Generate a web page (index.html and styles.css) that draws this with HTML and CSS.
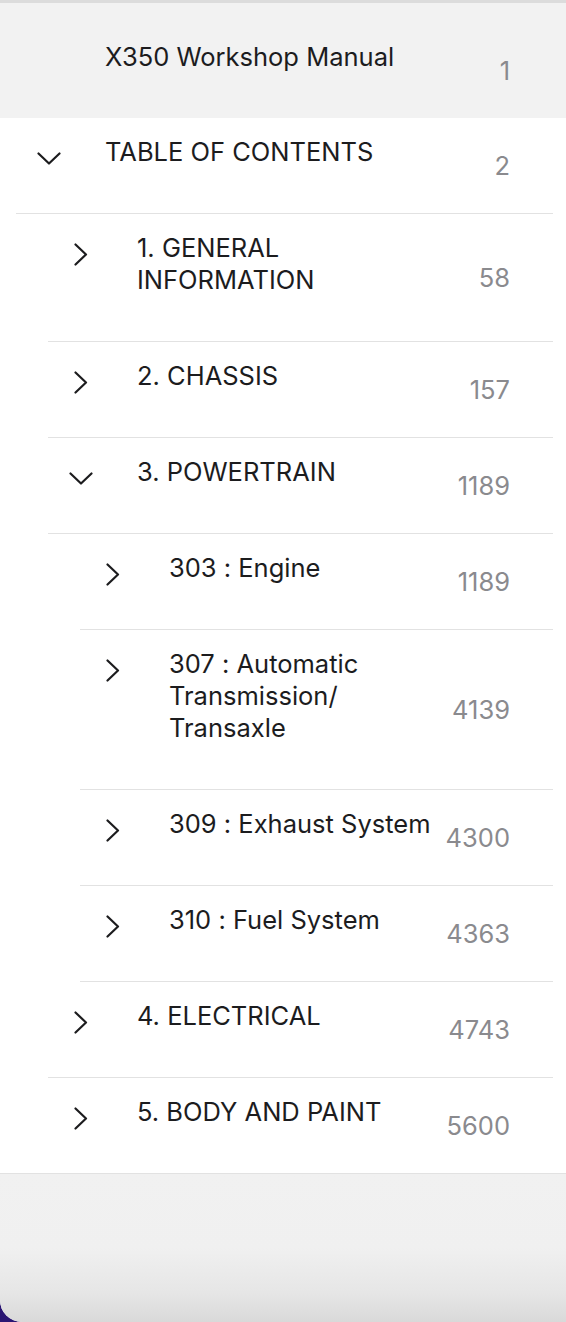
FILE: index.html
```html
<!DOCTYPE html>
<html lang="en">
<head>
    <meta charset="UTF-8">
    <meta name="viewport" content="width=device-width, initial-scale=1.0">
    <title>X350 Workshop Manual</title>
    <link rel="stylesheet" href="styles.css">
</head>
<body>
    <div class="window">
        <div class="manual-header">
            <div class="row">
                <span class="toggle"></span>
                <span class="title">X350 Workshop Manual</span>
                <span class="page">1</span>
            </div>
        </div>

        <div class="toc">
            <div class="row level-0">
                <span class="toggle">
                    <svg class="chev-down" width="24" height="13" viewBox="0 0 24 13"><polyline points="1.5,1.5 12,11.5 22.5,1.5"/></svg>
                </span>
                <span class="title">TABLE OF CONTENTS</span>
                <span class="page">2</span>
            </div>

            <div class="row level-1">
                <span class="toggle">
                    <svg class="chev-right" width="14" height="23" viewBox="0 0 14 23"><polyline points="1.5,1.5 12,11.5 1.5,21.5"/></svg>
                </span>
                <span class="title">1. GENERAL INFORMATION</span>
                <span class="page">58</span>
            </div>

            <div class="row level-1">
                <span class="toggle">
                    <svg class="chev-right" width="14" height="23" viewBox="0 0 14 23"><polyline points="1.5,1.5 12,11.5 1.5,21.5"/></svg>
                </span>
                <span class="title">2. CHASSIS</span>
                <span class="page">157</span>
            </div>

            <div class="row level-1">
                <span class="toggle">
                    <svg class="chev-down" width="24" height="13" viewBox="0 0 24 13"><polyline points="1.5,1.5 12,11.5 22.5,1.5"/></svg>
                </span>
                <span class="title">3. POWERTRAIN</span>
                <span class="page">1189</span>
            </div>

            <div class="row level-2">
                <span class="toggle">
                    <svg class="chev-right" width="14" height="23" viewBox="0 0 14 23"><polyline points="1.5,1.5 12,11.5 1.5,21.5"/></svg>
                </span>
                <span class="title">303 : Engine</span>
                <span class="page">1189</span>
            </div>

            <div class="row level-2">
                <span class="toggle">
                    <svg class="chev-right" width="14" height="23" viewBox="0 0 14 23"><polyline points="1.5,1.5 12,11.5 1.5,21.5"/></svg>
                </span>
                <span class="title">307 : Automatic Transmission/<wbr>Transaxle</span>
                <span class="page">4139</span>
            </div>

            <div class="row level-2">
                <span class="toggle">
                    <svg class="chev-right" width="14" height="23" viewBox="0 0 14 23"><polyline points="1.5,1.5 12,11.5 1.5,21.5"/></svg>
                </span>
                <span class="title">309 : Exhaust System</span>
                <span class="page">4300</span>
            </div>

            <div class="row level-2">
                <span class="toggle">
                    <svg class="chev-right" width="14" height="23" viewBox="0 0 14 23"><polyline points="1.5,1.5 12,11.5 1.5,21.5"/></svg>
                </span>
                <span class="title">310 : Fuel System</span>
                <span class="page">4363</span>
            </div>

            <div class="row level-1">
                <span class="toggle">
                    <svg class="chev-right" width="14" height="23" viewBox="0 0 14 23"><polyline points="1.5,1.5 12,11.5 1.5,21.5"/></svg>
                </span>
                <span class="title">4. ELECTRICAL</span>
                <span class="page">4743</span>
            </div>

            <div class="row level-1 last">
                <span class="toggle">
                    <svg class="chev-right" width="14" height="23" viewBox="0 0 14 23"><polyline points="1.5,1.5 12,11.5 1.5,21.5"/></svg>
                </span>
                <span class="title">5. BODY AND PAINT</span>
                <span class="page">5600</span>
            </div>
        </div>

        <div class="footer"></div>
    </div>
</body>
</html>
```

FILE: styles.css
```css
* {
    margin: 0;
    padding: 0;
    box-sizing: border-box;
    font-family: 'Inter', 'Liberation Sans', sans-serif;
}

body {
    background: #2b1673;
    height: 100vh;
}

.window {
    display: flex;
    flex-direction: column;
    min-height: 100vh;
    background: #ffffff;
    border-top: 3px solid #dcdcdc;
    border-bottom-left-radius: 22px;
    overflow: hidden;
}

.manual-header {
    background: #f2f2f2;
    padding-top: 20px;
}

.row {
    display: flex;
    align-items: center;
    margin-right: 13px;
    border-bottom: 1px solid #e2e2e2;
    color: #1c1c1e;
    font-size: 25.5px;
    line-height: 32px;
    font-feature-settings: "calt" 0;
}

.manual-header .row {
    border-bottom: none;
    margin-left: 16px;
}

.level-0 {
    margin-left: 16px;
}

.level-1 {
    margin-left: 48px;
}

.level-2 {
    margin-left: 80px;
}

.row.last {
    border-bottom: none;
}

.toc {
    border-bottom: 1px solid #e2e2e2;
}

.toggle {
    align-self: flex-start;
    width: 66px;
    flex-shrink: 0;
    display: flex;
    justify-content: center;
    padding-top: 29px;
}

.toggle svg polyline {
    fill: none;
    stroke: #1c1c1e;
    stroke-width: 2.2;
    stroke-linecap: round;
    stroke-linejoin: round;
}

.toggle .chev-down {
    margin-top: 5px;
}

.title {
    flex: 1;
    margin-left: 23px;
    padding-top: 18px;
    padding-bottom: 45px;
}

.page {
    min-width: 64px;
    margin-left: 8px;
    margin-right: 43px;
    text-align: right;
    color: #8a8a8e;
}

.footer {
    flex: 1;
    background: linear-gradient(to bottom, #f1f1f1 0%, #f0f0f0 50%, #e6e6e6 80%, #d9d9d9 100%);
}
```
